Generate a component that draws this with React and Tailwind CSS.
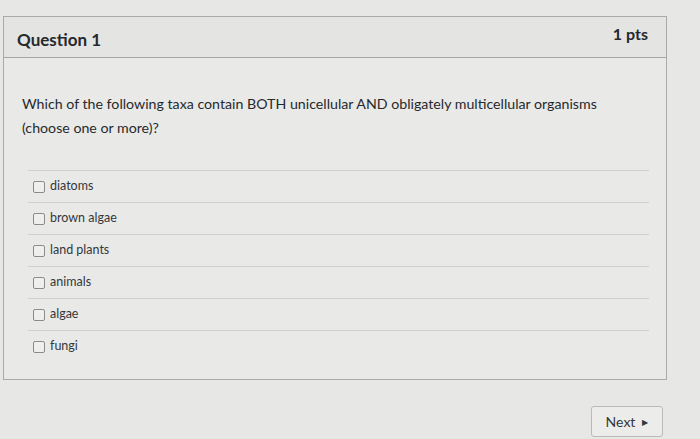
import React from "react";

const options = ["diatoms", "brown algae", "land plants", "animals", "algae", "fungi"];

const App = () => {
  return (
    <div
      className="w-[700px] h-[439px] overflow-hidden bg-[#e7e7e6] text-[#26292b]"
      style={{ fontFamily: "Lato, 'Noto Sans', sans-serif" }}
    >
      <div className="pt-[16px] pl-[3px] w-[667px]">
        <div className="border border-[#a9aaa9] bg-[#e9e9e8]">
          <div className="h-[41px] flex items-center justify-between pl-[13px] pr-[18px] bg-[#e4e4e3] border-b border-[#a5a6a5]">
            <h2 className="text-[17px] font-bold mt-[6px]">Question 1</h2>
            <span className="text-[16px] font-bold -mt-[7px]">1 pts</span>
          </div>
          <div className="pt-[34px] pb-[17px] pl-[18px] pr-[17px]">
            <p className="text-[14.2px] leading-[24px] w-[610px]">
              Which of the following taxa contain BOTH unicellular AND obligately multicellular
              organisms (choose one or more)?
            </p>
            <div className="mt-[30px] ml-[6px]">
              {options.map((o) => (
                <div
                  key={o}
                  className="h-[32px] border-t border-[#cfd0cf] flex items-center pl-[5px] gap-[5px]"
                >
                  <span className="w-[12px] h-[12px] border border-[#8a8c8b] rounded-[2px] bg-[#efefee]" />
                  <span className="text-[12.5px] text-[#34383b]">{o}</span>
                </div>
              ))}
            </div>
          </div>
        </div>
      </div>
      <div className="flex justify-end pr-[37px] mt-[26px]">
        <button className="h-[31px] w-[72px] border border-[#b9bab9] rounded-[3px] bg-[#ececeb] flex items-center justify-center gap-[7px] text-[14px] text-[#34373a]">
          Next
          <span className="text-[8px]">▶</span>
        </button>
      </div>
    </div>
  );
};

export default App;
